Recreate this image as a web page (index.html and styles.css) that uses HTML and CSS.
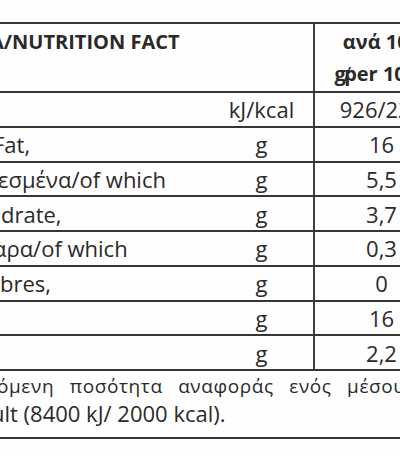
FILE: index.html
```html
<!DOCTYPE html>
<html lang="el">
<head>
<meta charset="utf-8">
<title>Nutrition facts</title>
<link rel="stylesheet" href="styles.css">
</head>
<body>
<main class="label">
  <div class="row head">
    <div class="name"><span class="shift-head">Α/NUTRITION FACT</span></div>
    <div class="unit"></div>
    <div class="val">ανά 100<br>g<span class="slash">/</span>per 100g</div>
  </div>
  <div class="row">
    <div class="name"></div>
    <div class="unit">kJ/kcal</div>
    <div class="val">926/222</div>
  </div>
  <div class="row">
    <div class="name"><span class="shift-f">Fat,</span></div>
    <div class="unit">g</div>
    <div class="val">16</div>
  </div>
  <div class="row">
    <div class="name"><span class="shift-e">εσμένα/of which</span></div>
    <div class="unit">g</div>
    <div class="val">5,5</div>
  </div>
  <div class="row">
    <div class="name"><span class="shift-d">drate,</span></div>
    <div class="unit">g</div>
    <div class="val">3,7</div>
  </div>
  <div class="row">
    <div class="name"><span class="shift-a">αρα/of which</span></div>
    <div class="unit">g</div>
    <div class="val">0,3</div>
  </div>
  <div class="row">
    <div class="name"><span class="shift-b">bres,</span></div>
    <div class="unit">g</div>
    <div class="val">0</div>
  </div>
  <div class="row">
    <div class="name"></div>
    <div class="unit">g</div>
    <div class="val">16</div>
  </div>
  <div class="row">
    <div class="name"></div>
    <div class="unit">g</div>
    <div class="val">2,2</div>
  </div>
  <p class="note">
    <span class="note-line greek">όμενη ποσότητα αναφοράς ενός μέσου ενήλικα</span>
    <span class="note-line latin">ult (8400 kJ/ 2000 kcal).</span>
  </p>
</main>
</body>
</html>
```
FILE: styles.css
```css
html, body {
  margin: 0;
  padding: 0;
  background: #fefefe;
  overflow: hidden;
}

body {
  width: 400px;
  height: 457px;
  font-family: "Open Sans", "Noto Sans", sans-serif;
  color: #2a2a2a;
}

.label {
  width: 448px;
  margin-top: 22px;
  border-top: 2px solid #363636;
}

.row {
  display: grid;
  grid-template-columns: 210px 103px 135px;
  height: 34.75px;
  box-sizing: border-box;
  border-bottom: 2px solid #363636;
  font-size: 22px;
}

.row > div {
  display: flex;
  align-items: center;
  white-space: nowrap;
  overflow: hidden;
}

.unit {
  justify-content: center;
}

.val {
  justify-content: center;
  border-left: 2px solid #404040;
}

.head {
  height: 69px;
  font-weight: 700;
  font-size: 20px;
}

.head > div {
  align-items: flex-start;
}

.head .name {
  padding-top: 4px;
}

.head .val {
  display: block;
  text-align: center;
  line-height: 32px;
  padding-top: 2px;
}

.slash {
  margin-left: -2px;
  margin-right: -7px;
  font-weight: 400;
}

.shift-head { margin-left: -10px; }
.shift-f { margin-left: -7px; }
.shift-e { margin-left: -2px; }
.shift-d { margin-left: 1px; }
.shift-a { margin-left: -7px; }
.shift-b { margin-left: 0; }

.note {
  margin: 0;
  height: 68px;
  box-sizing: border-box;
  padding-top: 2px;
  border-bottom: 2px solid #363636;
  font-size: 19px;
  line-height: 27px;
}

.note-line {
  display: block;
  white-space: nowrap;
}

.greek {
  margin-left: -3px;
  letter-spacing: 0.6px;
  word-spacing: 10px;
}

.latin {
  font-size: 22px;
  margin-left: -9px;
}
```
